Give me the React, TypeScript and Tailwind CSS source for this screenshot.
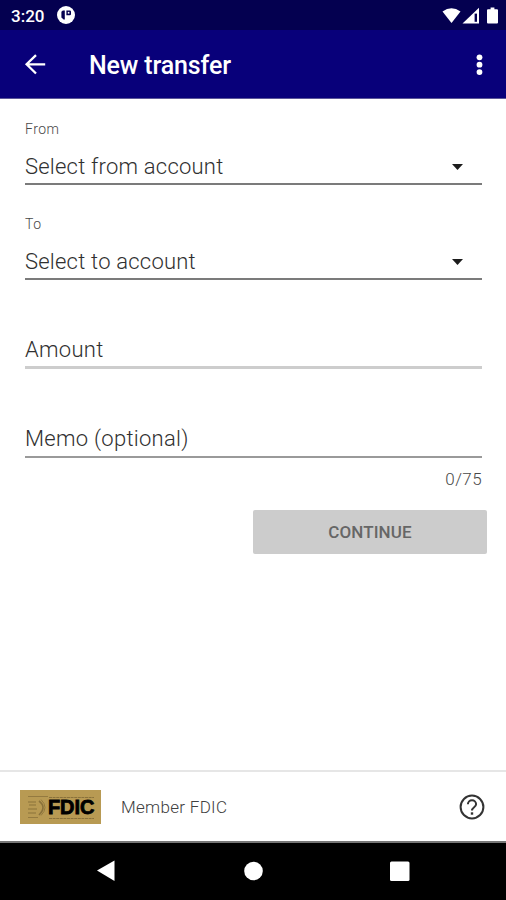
import React from 'react';

interface SelectFieldProps {
  label: string;
  placeholder: string;
}

const BackIcon: React.FC<{ className?: string }> = ({ className }) => (
  <svg viewBox="0 0 22 22" className={className} fill="none" stroke="currentColor" strokeWidth="2.3">
    <path d="M21.2 11.3H2.5M12 2.1L2.6 11.3l9.4 9.2" />
  </svg>
);

const StatusBar: React.FC = () => (
  <div className="flex h-[30px] items-center bg-[#040050] pl-[11px] pr-2 text-white">
    <span className="w-[46px] text-[17px] leading-5 font-medium mt-px">3:20</span>
    {/* Running app notification */}
    <svg viewBox="0 0 18 18" className="h-[18px] w-[18px]">
      <circle cx="9" cy="9" r="9" fill="#fff" />
      <path d="M5.8 4.4h2v9.2H6.6L4.4 11.4V5.8z" fill="#040050" />
      <path d="M9.4 4.4h3.4q1.2 0 1.2 1.2v2.4q0 1.2-1.2 1.2H9.4z" fill="#040050" />
      <path d="M10.8 5.9h1.6v1.7h-1.6z" fill="#fff" />
    </svg>
    <svg viewBox="0 0 56 18" className="ml-auto mt-px h-[18px] w-[56px]" fill="#fff">
      <path d="M0.5 4.5Q9.5-2.2 18.5 4.5L9.5 16z" />
      <path d="M20.5 16.5L37 0.8V16.5z" />
      <path d="M32.6 6.6h2.4v8.2h-2.4z" fill="#040050" />
      <path d="M46 2.2h2.6V0.6h3.8v1.6H55q1 0 1 1V15.6q0 1-1 1h-9q-1 0-1-1V3.2q0-1 1-1z" />
    </svg>
  </div>
);

const AppBar: React.FC = () => (
  <header className="flex h-[69px] items-center border-b border-[#5b5699] bg-[#08007a] pl-6 pr-[23px] text-white">
    <button aria-label="Back">
      <BackIcon className="h-[22px] w-[22px]" />
    </button>
    <h1 className="ml-[43px] mt-[3px] text-[25px] leading-8 font-medium tracking-[-0.15px]">New transfer</h1>
    <button aria-label="More options" className="ml-auto mt-px">
      <svg viewBox="0 0 7 22" className="h-[22px] w-[7px]" fill="currentColor">
        <circle cx="3.5" cy="3.3" r="2.9" />
        <circle cx="3.5" cy="10.7" r="2.9" />
        <circle cx="3.5" cy="18.1" r="2.9" />
      </svg>
    </button>
  </header>
);

const SelectField: React.FC<SelectFieldProps> = ({ label, placeholder }) => (
  <div className="h-[95px]">
    <div className="h-[22px] text-[14px] leading-[22px] font-light tracking-[0.45px] text-[#484848]">{label}</div>
    <div className="flex h-[45px] items-center justify-between border-b-2 border-[#7b7b7b] pr-[19px]">
      <span className="mt-[11px] text-[22px] leading-7 font-light tracking-[0.22px] text-[#303030]">{placeholder}</span>
      <svg viewBox="0 0 11 6" className="mt-[10px] h-[6px] w-[11px]" fill="#1c1c1c">
        <path d="M0 0h11L5.5 6z" />
      </svg>
    </div>
  </div>
);

const FdicBadge: React.FC = () => (
  <div className="relative flex h-[34px] w-[81px] items-center bg-[#b89a53] pl-[7px]">
    <svg viewBox="0 0 81 34" className="absolute inset-0 h-[34px] w-[81px]" fill="none" stroke="#8a723b">
      <path d="M8 6.5h20M8 27.5h10" strokeWidth="0.8" />
      <path d="M29 7.5h45M29 28.5h45" strokeWidth="1.2" strokeDasharray="3 0.6" />
      <path d="M8 12h8M9 15h7M8 19h9M8 23h8" strokeWidth="1" />
      <path d="M19 11q8 6 0 14" strokeWidth="1.6" />
      <path d="M21 9.5q8 8 0 16" strokeWidth="0.8" />
    </svg>
    <span className="relative ml-[21px] mt-px text-[20px] leading-5 font-bold tracking-[-0.1px] text-black font-['Liberation_Sans',sans-serif] [-webkit-text-stroke:0.8px_black]">
      FDIC
    </span>
  </div>
);

const App: React.FC = () => {
  return (
    <div className="flex h-[900px] w-[506px] flex-col overflow-hidden bg-white font-['Roboto',sans-serif]">
      <StatusBar />
      <AppBar />

      <main className="flex-1 pl-[25px] pr-6 pt-[19px]">
        <SelectField label="From" placeholder="Select from account" />
        <SelectField label="To" placeholder="Select to account" />

        <div className="mt-[28px] flex h-[33px] items-start border-b-[3px] border-[#cdcdcd]">
          <span className="text-[22px] leading-7 font-light tracking-[0.3px] text-[#303030]">Amount</span>
        </div>
        <div className="mt-[56px] flex h-[33px] items-start border-b-2 border-[#9a9a9a]">
          <span className="text-[22px] leading-7 font-light tracking-[0.28px] text-[#303030]">Memo (optional)</span>
        </div>
        <div className="mt-[11px] text-right text-[17px] leading-5 font-light tracking-[0.4px] text-[#484848]">0/75</div>

        <button className="-mr-[5px] ml-auto mt-[21px] block h-[44px] w-[234px] rounded-[2px] bg-[#cccccc] pt-[2px] text-[17px] font-medium tracking-[0.1px] text-[#666]">
          CONTINUE
        </button>
      </main>

      <footer className="flex h-[71px] items-center border-t-2 border-[#e6e6e6] pl-5 pr-[21px]">
        <FdicBadge />
        <span className="ml-5 mt-[2px] text-[17px] font-light tracking-[0.3px] text-[#404040]">Member FDIC</span>
        <button aria-label="Help" className="ml-auto">
          <svg viewBox="0 0 26 26" className="h-[26px] w-[26px]" fill="none" stroke="#333" strokeWidth="2">
            <circle cx="13" cy="13" r="11.4" />
            <path d="M8.9 10.3a4.1 4.1 0 0 1 8.2 0c0 2.8-4.1 3.1-4.1 6.2" />
            <path d="M13 18.3v2.4" strokeWidth="2.4" />
          </svg>
        </button>
      </footer>

      {/* Android navigation */}
      <nav className="flex h-[59px] items-center border-t-2 border-[#777] bg-black text-white">
        <svg viewBox="0 0 506 57" className="h-[57px] w-[506px]" fill="currentColor">
          <path d="M97 27.5L114.5 17.5V38z" />
          <circle cx="253.5" cy="28" r="9.3" />
          <rect x="390" y="18.5" width="19.5" height="19.5" rx="1.5" />
        </svg>
      </nav>
    </div>
  );
};

export default App;
